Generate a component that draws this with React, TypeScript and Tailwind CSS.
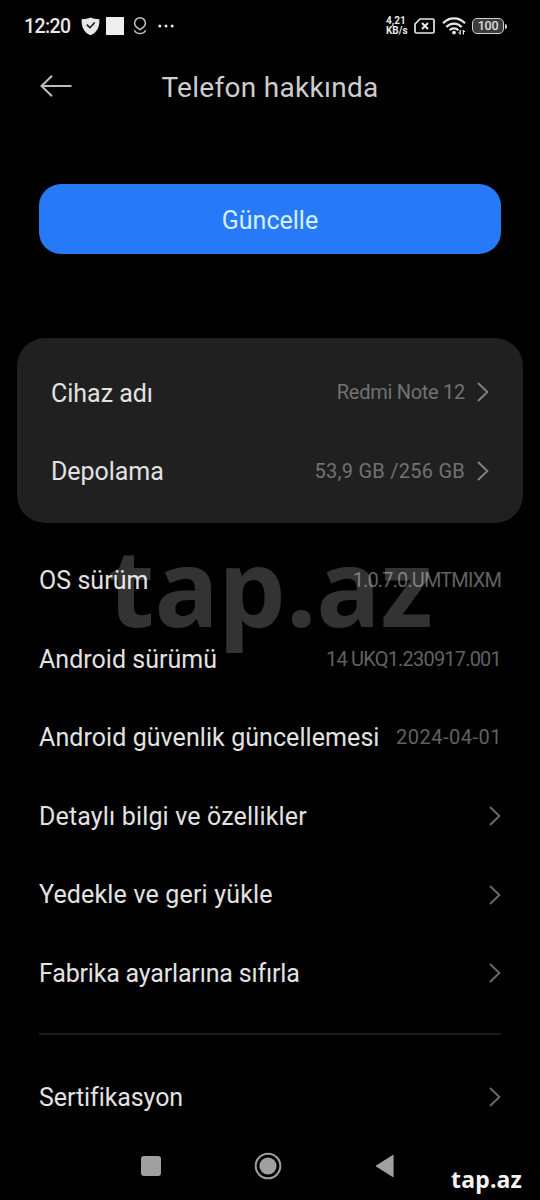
type Row = {
  label: string;
  labelClass?: string;
  value?: string;
  valueClass?: string;
  chevron?: boolean;
};

const deviceRows: Row[] = [
  { label: "Cihaz adı", labelClass: "pt-[2px] tracking-[-0.02px]", value: "Redmi Note 12", valueClass: "tracking-[-0.28px]", chevron: true },
  { label: "Depolama", labelClass: "pt-[2px] tracking-[-0.05px]", value: "53,9 GB /256 GB", valueClass: "tracking-[0.25px]", chevron: true },
];

const infoRows: Row[] = [
  { label: "OS sürüm", labelClass: "pt-[1px] tracking-[0.05px]", value: "1.0.7.0.UMTMIXM", valueClass: "tracking-[-0.86px]" },
  { label: "Android sürümü", labelClass: "pt-[1px] tracking-[0.02px]", value: "14 UKQ1.230917.001", valueClass: "tracking-[-0.8px]" },
  { label: "Android güvenlik güncellemesi", labelClass: "pt-[1px] tracking-[0.07px]", value: "2024-04-01", valueClass: "tracking-[0.5px] -mr-px" },
  { label: "Detaylı bilgi ve özellikler", labelClass: "pt-[1px] tracking-[0.15px]", chevron: true },
  { label: "Yedekle ve geri yükle", labelClass: "pt-[1px] tracking-[0.17px]", chevron: true },
  { label: "Fabrika ayarlarına sıfırla", labelClass: "pt-[1px] tracking-[-0.18px]", chevron: true },
];

function Chevron({ className }: { className: string }) {
  return (
    <svg width="12" height="20" viewBox="0 0 12 20" fill="none" className={className}>
      <path d="M1 1L10.4 10L1 19" stroke="currentColor" strokeWidth="1.8" />
    </svg>
  );
}

function StatusBar() {
  return (
    <div className="flex h-[52px] shrink-0 items-center pl-[24px] pr-[33px] text-[#e8e8e8]">
      <span className="w-[57px] pt-[2px] text-[19.5px] font-medium tracking-[-0.6px]">12:20</span>
      <svg width="19" height="19" viewBox="0 0 19 19" className="shrink-0">
        <path d="M9.5 0.5C12 1.6 15 2.2 18.4 2.2C18.6 9 17 15 9.5 18.3C2 15 0.4 9 0.6 2.2C4 2.2 7 1.6 9.5 0.5Z" fill="currentColor" />
        <path d="M5.8 7.6L9 10.7L13.7 5.6" fill="none" stroke="#111" strokeWidth="1.5" />
      </svg>
      <div className="ml-[6px] size-[18px] shrink-0 bg-[#eeeeee]" />
      <svg width="14" height="18" viewBox="0 0 14 18" fill="none" className="ml-[9px] shrink-0" stroke="#c4c4c4" strokeWidth="1.5">
        <path d="M7 12.6C4.4 11 1.6 9.4 1.6 6.2A5.4 5.4 0 0 1 12.4 6.2C12.4 9.4 9.6 11 7 12.6Z" />
        <path d="M1.4 13.2C3.4 17.6 10.6 17.6 12.6 13.2" />
      </svg>
      <svg width="16" height="4" viewBox="0 0 16 4" className="ml-[11px] shrink-0" fill="currentColor">
        <circle cx="1.8" cy="2" r="1.5" />
        <circle cx="8" cy="2" r="1.5" />
        <circle cx="14.2" cy="2" r="1.5" />
      </svg>

      <div className="ml-auto flex items-center">
        <div className="w-[28px] text-[10px] font-bold leading-[9.7px]">
          <div>4,21</div>
          <div>KB/s</div>
        </div>
        <svg width="21" height="16" viewBox="0 0 21 16" fill="none" stroke="currentColor" strokeWidth="1.7">
          <path d="M6 1H18.6Q20 1 20 2.4V13.6Q20 15 18.6 15H2.4Q1 15 1 13.6V6Z" />
          <path d="M8 5L14 11M14 5L8 11" strokeWidth="2" />
        </svg>
        <svg width="24" height="18" viewBox="0 0 24 18" fill="none" stroke="currentColor" strokeWidth="2.2" className="ml-[7px]">
          <path d="M1 6.3C7.2 -0.2 16.8 -0.2 23 6.3" />
          <path d="M4.3 10C8.6 5.4 15.4 5.4 19.7 10" />
          <path d="M7.7 13.2C10 10.8 14 10.8 16.3 13.2" />
          <circle cx="12" cy="15.6" r="1.9" fill="currentColor" stroke="none" />
          <path d="M18.2 13V17.4M21.4 13V17.4" strokeWidth="1.3" />
          <path d="M16.6 15.4L18.2 17M21.4 13.4L23 15" strokeWidth="1" />
        </svg>
        <div className="ml-[6px] flex h-[16px] w-[32px] items-center justify-center rounded-[5px] border-[1.5px] border-[#cfcfcf] bg-[#3c3c3c] text-[12.5px] font-medium leading-none tracking-[-0.3px] text-[#dcdcdc]">
          100
        </div>
        <div className="ml-px h-[5px] w-[2px] rounded-r-full bg-[#cfcfcf]" />
      </div>
    </div>
  );
}

function SettingRow({ row, inCard }: { row: Row; inCard?: boolean }) {
  return (
    <div className="flex h-[78.6px] shrink-0 items-center justify-between whitespace-nowrap">
      <span className={`text-[25px] text-[#e2e2e2] ${row.labelClass ?? ""}`}>{row.label}</span>
      <div className="flex items-center">
        {row.value && (
          <span className={`text-[20px] ${inCard ? "text-[#727272]" : "text-[#616161]"} ${row.valueClass ?? ""}`}>{row.value}</span>
        )}
        {row.chevron && <Chevron className={inCard ? "ml-[12px] text-[#858585]" : "text-[#6c6c6c]"} />}
      </div>
    </div>
  );
}

function NavBar() {
  return (
    <div className="flex h-[60px] shrink-0 items-center pl-[140.5px] text-[#a0a0a0]">
      <div className="size-[20px] rounded-[3px] bg-[#a0a0a0]" />
      <svg width="28" height="28" viewBox="0 0 28 28" className="ml-[93.5px]">
        <circle cx="14" cy="14" r="12.3" fill="none" stroke="currentColor" strokeWidth="2" />
        <circle cx="14" cy="14" r="8.6" fill="currentColor" />
      </svg>
      <svg width="19" height="24" viewBox="0 0 19 24" className="ml-[93px]">
        <path d="M1.4 12L18 1.6V22.4Z" fill="currentColor" stroke="currentColor" strokeWidth="1.2" strokeLinejoin="round" />
      </svg>
    </div>
  );
}

export default function App() {
  return (
    <div className="relative flex h-[1200px] w-[540px] flex-col overflow-hidden bg-black font-['Roboto','Noto_Sans',sans-serif]">
      <StatusBar />

      <div className="flex h-[71px] shrink-0 items-center px-[40px]">
        <svg width="32" height="22" viewBox="0 0 32 22" fill="none" stroke="#bdbdbd" strokeWidth="2" className="-mt-[3px]">
          <path d="M31.5 11H1.5M12 0.8L1.5 11L12 21.2" />
        </svg>
        <h1 className="flex-1 text-center text-[28px] tracking-[0.3px] text-[#cdcdcd]">Telefon hakkında</h1>
        <div className="w-[32px]" />
      </div>

      <button className="mx-[39px] mt-[61px] h-[70px] shrink-0 rounded-[22px] bg-[#277af7] pt-[3px] text-[25px] text-[#d5efff]">
        Güncelle
      </button>

      <div className="mx-[17px] mt-[84px] h-[185px] shrink-0 rounded-[28px] bg-[#202020] pl-[34px] pr-[34px] pt-[15px]">
        {deviceRows.map((row) => (
          <SettingRow key={row.label} row={row} inCard />
        ))}
      </div>

      <div className="mt-[18px] shrink-0 px-[39px]">
        {infoRows.map((row) => (
          <SettingRow key={row.label} row={row} />
        ))}
        <div className="mb-[23px] mt-[20px] h-[2px] bg-[#1c1c1c]" />
        <SettingRow row={{ label: "Sertifikasyon", labelClass: "pt-[1px] tracking-[-0.08px]", chevron: true }} />
      </div>

      <NavBar />

      {/* watermarks */}
      <div className="pointer-events-none absolute left-[108px] top-[511px] font-['Noto_Sans'] text-[107px] font-bold leading-[150px] text-white/20">
        tap.az
      </div>
      <div className="pointer-events-none absolute left-[451px] top-[1163px] font-['Noto_Sans'] text-[23px] font-bold leading-[32px] tracking-[0.2px] text-[#f2f2f2]">
        tap.az
      </div>
    </div>
  );
}
